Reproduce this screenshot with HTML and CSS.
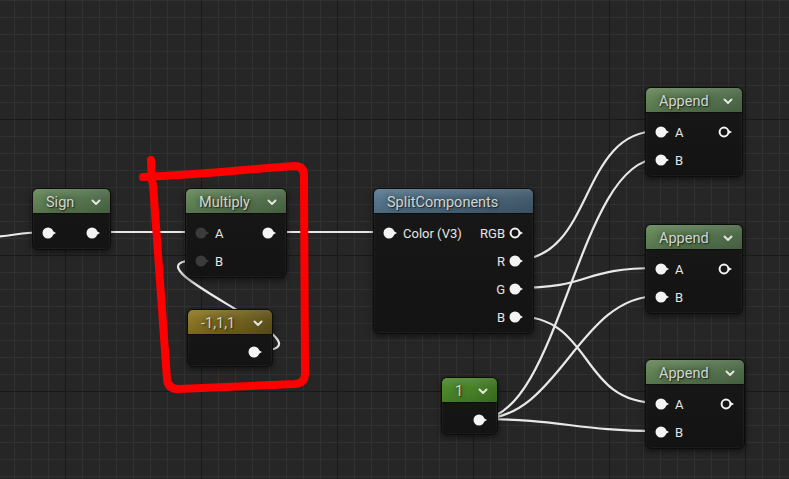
FILE: index.html
```html
<!DOCTYPE html>
<html>
<head>
<meta charset="utf-8">
<title>Material Graph</title>
<link rel="stylesheet" href="styles.css">
</head>
<body>
<div class="graph">
  <svg class="wires" width="789" height="479" viewBox="0 0 789 479">
    <path d="M -30 238 C 10 238, 15 232, 47 232"/>
    <path d="M 93 232 L 387 232"/>
    <path d="M 255 351 C 355 351, 105 260, 200 260"/>
    <path d="M 515 260 C 595 260, 578 131, 658 131"/>
    <path d="M 515 288 C 595 288, 578 268, 658 268"/>
    <path d="M 515 316 C 595 316, 578 403, 658 403"/>
    <path d="M 480 419 C 560 419, 578 159, 658 159"/>
    <path d="M 480 419 C 560 419, 578 296, 658 296"/>
    <path d="M 480 419 C 560 419, 578 431, 658 431"/>
  </svg>

  <div class="node math n-sign">
    <div class="hdr"><span class="title">Sign</span><svg class="chev" viewBox="0 0 10 7"><polyline points="1.5,1.5 5,5 8.5,1.5"/></svg></div>
    <div class="body">
      <div class="row">
        <span class="pin"><svg viewBox="0 0 16 12"><circle cx="6" cy="6" r="5.5"/><polygon points="10,3.8 14,6 10,8.2"/></svg></span>
        <span class="pin"><svg viewBox="0 0 16 12"><circle cx="6" cy="6" r="5.5"/><polygon points="10,3.8 14,6 10,8.2"/></svg></span>
      </div>
    </div>
  </div>

  <div class="node math n-mul">
    <div class="hdr"><span class="title">Multiply</span><svg class="chev" viewBox="0 0 10 7"><polyline points="1.5,1.5 5,5 8.5,1.5"/></svg></div>
    <div class="body">
      <div class="row">
        <span class="pin dim"><svg viewBox="0 0 16 12"><circle cx="6" cy="6" r="5.5"/><polygon points="10,3.8 14,6 10,8.2"/></svg><span class="lbl">A</span></span>
        <span class="pin"><svg viewBox="0 0 16 12"><circle cx="6" cy="6" r="5.5"/><polygon points="10,3.8 14,6 10,8.2"/></svg></span>
      </div>
      <div class="row">
        <span class="pin dim"><svg viewBox="0 0 16 12"><circle cx="6" cy="6" r="5.5"/><polygon points="10,3.8 14,6 10,8.2"/></svg><span class="lbl">B</span></span>
      </div>
    </div>
  </div>

  <div class="node const3 n-c3">
    <div class="hdr"><span class="title">-1,1,1</span><svg class="chev" viewBox="0 0 10 7"><polyline points="1.5,1.5 5,5 8.5,1.5"/></svg></div>
    <div class="body">
      <div class="row end">
        <span class="pin"><svg viewBox="0 0 16 12"><circle cx="6" cy="6" r="5.5"/><polygon points="10,3.8 14,6 10,8.2"/></svg></span>
      </div>
    </div>
  </div>

  <div class="node split n-split">
    <div class="hdr"><span class="title">SplitComponents</span></div>
    <div class="body">
      <div class="row">
        <span class="pin"><svg viewBox="0 0 16 12"><circle cx="6" cy="6" r="5.5"/><polygon points="10,3.8 14,6 10,8.2"/></svg><span class="lbl">Color (V3)</span></span>
        <span class="pin"><span class="lbl out">RGB</span><svg viewBox="0 0 16 12"><circle class="ring" cx="6" cy="6" r="4.4"/><polygon points="10,3.8 14,6 10,8.2"/></svg></span>
      </div>
      <div class="row end">
        <span class="pin"><span class="lbl out">R</span><svg viewBox="0 0 16 12"><circle cx="6" cy="6" r="5.5"/><polygon points="10,3.8 14,6 10,8.2"/></svg></span>
      </div>
      <div class="row end">
        <span class="pin"><span class="lbl out">G</span><svg viewBox="0 0 16 12"><circle cx="6" cy="6" r="5.5"/><polygon points="10,3.8 14,6 10,8.2"/></svg></span>
      </div>
      <div class="row end">
        <span class="pin"><span class="lbl out">B</span><svg viewBox="0 0 16 12"><circle cx="6" cy="6" r="5.5"/><polygon points="10,3.8 14,6 10,8.2"/></svg></span>
      </div>
    </div>
  </div>

  <div class="node math append n-ap1">
    <div class="hdr"><span class="title">Append</span><svg class="chev" viewBox="0 0 10 7"><polyline points="1.5,1.5 5,5 8.5,1.5"/></svg></div>
    <div class="body">
      <div class="row">
        <span class="pin"><svg viewBox="0 0 16 12"><circle cx="6" cy="6" r="5.5"/><polygon points="10,3.8 14,6 10,8.2"/></svg><span class="lbl">A</span></span>
        <span class="pin"><svg viewBox="0 0 16 12"><circle class="ring" cx="6" cy="6" r="4.4"/><polygon points="10,3.8 14,6 10,8.2"/></svg></span>
      </div>
      <div class="row">
        <span class="pin"><svg viewBox="0 0 16 12"><circle cx="6" cy="6" r="5.5"/><polygon points="10,3.8 14,6 10,8.2"/></svg><span class="lbl">B</span></span>
      </div>
    </div>
  </div>

  <div class="node math append n-ap2">
    <div class="hdr"><span class="title">Append</span><svg class="chev" viewBox="0 0 10 7"><polyline points="1.5,1.5 5,5 8.5,1.5"/></svg></div>
    <div class="body">
      <div class="row">
        <span class="pin"><svg viewBox="0 0 16 12"><circle cx="6" cy="6" r="5.5"/><polygon points="10,3.8 14,6 10,8.2"/></svg><span class="lbl">A</span></span>
        <span class="pin"><svg viewBox="0 0 16 12"><circle class="ring" cx="6" cy="6" r="4.4"/><polygon points="10,3.8 14,6 10,8.2"/></svg></span>
      </div>
      <div class="row">
        <span class="pin"><svg viewBox="0 0 16 12"><circle cx="6" cy="6" r="5.5"/><polygon points="10,3.8 14,6 10,8.2"/></svg><span class="lbl">B</span></span>
      </div>
    </div>
  </div>

  <div class="node math append n-ap3">
    <div class="hdr"><span class="title">Append</span><svg class="chev" viewBox="0 0 10 7"><polyline points="1.5,1.5 5,5 8.5,1.5"/></svg></div>
    <div class="body">
      <div class="row">
        <span class="pin"><svg viewBox="0 0 16 12"><circle cx="6" cy="6" r="5.5"/><polygon points="10,3.8 14,6 10,8.2"/></svg><span class="lbl">A</span></span>
        <span class="pin"><svg viewBox="0 0 16 12"><circle class="ring" cx="6" cy="6" r="4.4"/><polygon points="10,3.8 14,6 10,8.2"/></svg></span>
      </div>
      <div class="row">
        <span class="pin"><svg viewBox="0 0 16 12"><circle cx="6" cy="6" r="5.5"/><polygon points="10,3.8 14,6 10,8.2"/></svg><span class="lbl">B</span></span>
      </div>
    </div>
  </div>

  <div class="node const1 n-c1">
    <div class="hdr"><span class="title">1</span><svg class="chev" viewBox="0 0 10 7"><polyline points="1.5,1.5 5,5 8.5,1.5"/></svg></div>
    <div class="body">
      <div class="row end">
        <span class="pin"><svg viewBox="0 0 16 12"><circle cx="6" cy="6" r="5.5"/><polygon points="10,3.8 14,6 10,8.2"/></svg></span>
      </div>
    </div>
  </div>

  <svg class="markup" width="789" height="479" viewBox="0 0 789 479">
    <path d="M 151 160 L 152 181"/>
    <path d="M 143 177 C 200 175, 260 168, 295 166 Q 304 166 304 176 L 305 374 Q 305 383 295 384 L 178 389 Q 168 389 167 379 L 153 184"/>
  </svg>
</div>
</body>
</html>
```

FILE: styles.css
```css
* { box-sizing: border-box; }

html, body {
  margin: 0;
  padding: 0;
  background: #262626;
}

.graph {
  position: relative;
  width: 789px;
  height: 479px;
  overflow: hidden;
  font-family: Roboto, "Noto Sans", "Liberation Sans", sans-serif;
  background-color: #262626;
  background-image:
    linear-gradient(to right, #191919 1px, transparent 1px),
    linear-gradient(to bottom, #191919 1px, transparent 1px),
    linear-gradient(to right, #313131 1px, transparent 1px),
    linear-gradient(to bottom, #313131 1px, transparent 1px);
  background-size: 136px 136px, 136px 136px, 17px 17px, 17px 17px;
  background-position: 65px 0, 0 119px, 14px 0, 0 0;
}

.wires {
  position: absolute;
  left: 0;
  top: 0;
  z-index: 0;
}

.wires path {
  fill: none;
  stroke: #e8e8e8;
  stroke-width: 2.2;
}

.markup {
  position: absolute;
  left: 0;
  top: 0;
  z-index: 5;
}

.markup path {
  fill: none;
  stroke: #ff0000;
  stroke-width: 8;
  stroke-linecap: round;
  stroke-linejoin: round;
}

.node {
  position: absolute;
  z-index: 2;
  border-radius: 6px;
  background: linear-gradient(180deg, #181818, #131313);
  border: 1px solid #0c0c0c;
  box-shadow: 0 2px 6px rgba(0, 0, 0, 0.55), inset 0 0 0 1px rgba(255, 255, 255, 0.04);
  overflow: hidden;
}

.hdr {
  height: 25px;
  display: flex;
  align-items: center;
  justify-content: space-between;
  padding: 2px 9px 0 13px;
  border-bottom: 1px solid #0d0d0d;
}

.title {
  font-size: 14.5px;
  color: #d0d6d0;
  white-space: nowrap;
  text-shadow: 0 0 6px rgba(0, 0, 0, 0.6), 1px 1px 1px rgba(0, 0, 0, 0.55);
}

.chev {
  width: 10px;
  height: 7px;
  flex: none;
}

.chev polyline {
  fill: none;
  stroke: #e2e2e2;
  stroke-width: 2;
  stroke-linecap: round;
  stroke-linejoin: round;
}

.math .hdr {
  background:
    linear-gradient(180deg, rgba(255, 255, 255, 0.10), rgba(255, 255, 255, 0) 40%, rgba(0, 0, 0, 0.12)),
    linear-gradient(90deg, #648658, #587851 55%, #4e6a48);
}

.split .hdr {
  background:
    linear-gradient(180deg, rgba(255, 255, 255, 0.10), rgba(255, 255, 255, 0) 40%, rgba(0, 0, 0, 0.12)),
    linear-gradient(90deg, #58788f, #4d6a80 55%, #425a6c);
}

.const3 .hdr {
  background:
    linear-gradient(180deg, rgba(255, 255, 255, 0.10), rgba(255, 255, 255, 0) 40%, rgba(0, 0, 0, 0.12)),
    linear-gradient(90deg, #8d7826, #756420 55%, #5f511b);
}

.const1 .hdr {
  background:
    linear-gradient(180deg, rgba(255, 255, 255, 0.10), rgba(255, 255, 255, 0) 40%, rgba(0, 0, 0, 0.10)),
    linear-gradient(90deg, #4d8a2a, #478227 55%, #3f7323);
}

.body {
  padding: 5px 8px 2px 9px;
}

.const3 .body,
.const1 .body {
  padding-top: 3px;
  padding-bottom: 0;
}

.row {
  height: 28px;
  display: flex;
  align-items: center;
  justify-content: space-between;
}

.row.end {
  justify-content: flex-end;
}

.pin {
  display: flex;
  align-items: center;
}

.pin svg {
  width: 16px;
  height: 12px;
  flex: none;
}

.pin svg circle,
.pin svg polygon {
  fill: #f4f4f4;
}

.pin svg circle.ring {
  fill: none;
  stroke: #f4f4f4;
  stroke-width: 2;
}

.pin.dim svg circle,
.pin.dim svg polygon {
  fill: #3b3b3b;
}

.lbl {
  font-size: 13px;
  color: #e6e6e6;
  margin-left: 4px;
  white-space: nowrap;
}

.lbl.out {
  margin-left: 0;
  margin-right: 4px;
}

.n-sign { left: 32px; top: 188px; width: 79px; }
.n-mul { left: 185px; top: 188px; width: 102px; }
.n-c3 { left: 187px; top: 309px; width: 86px; }
.n-split { left: 373px; top: 188px; width: 161px; }
.n-ap1 { left: 645px; top: 87px; width: 98px; }
.n-ap2 { left: 645px; top: 224px; width: 98px; }
.n-ap3 { left: 645px; top: 359px; width: 100px; }
.n-c1 { left: 441px; top: 377px; width: 57px; }
```
